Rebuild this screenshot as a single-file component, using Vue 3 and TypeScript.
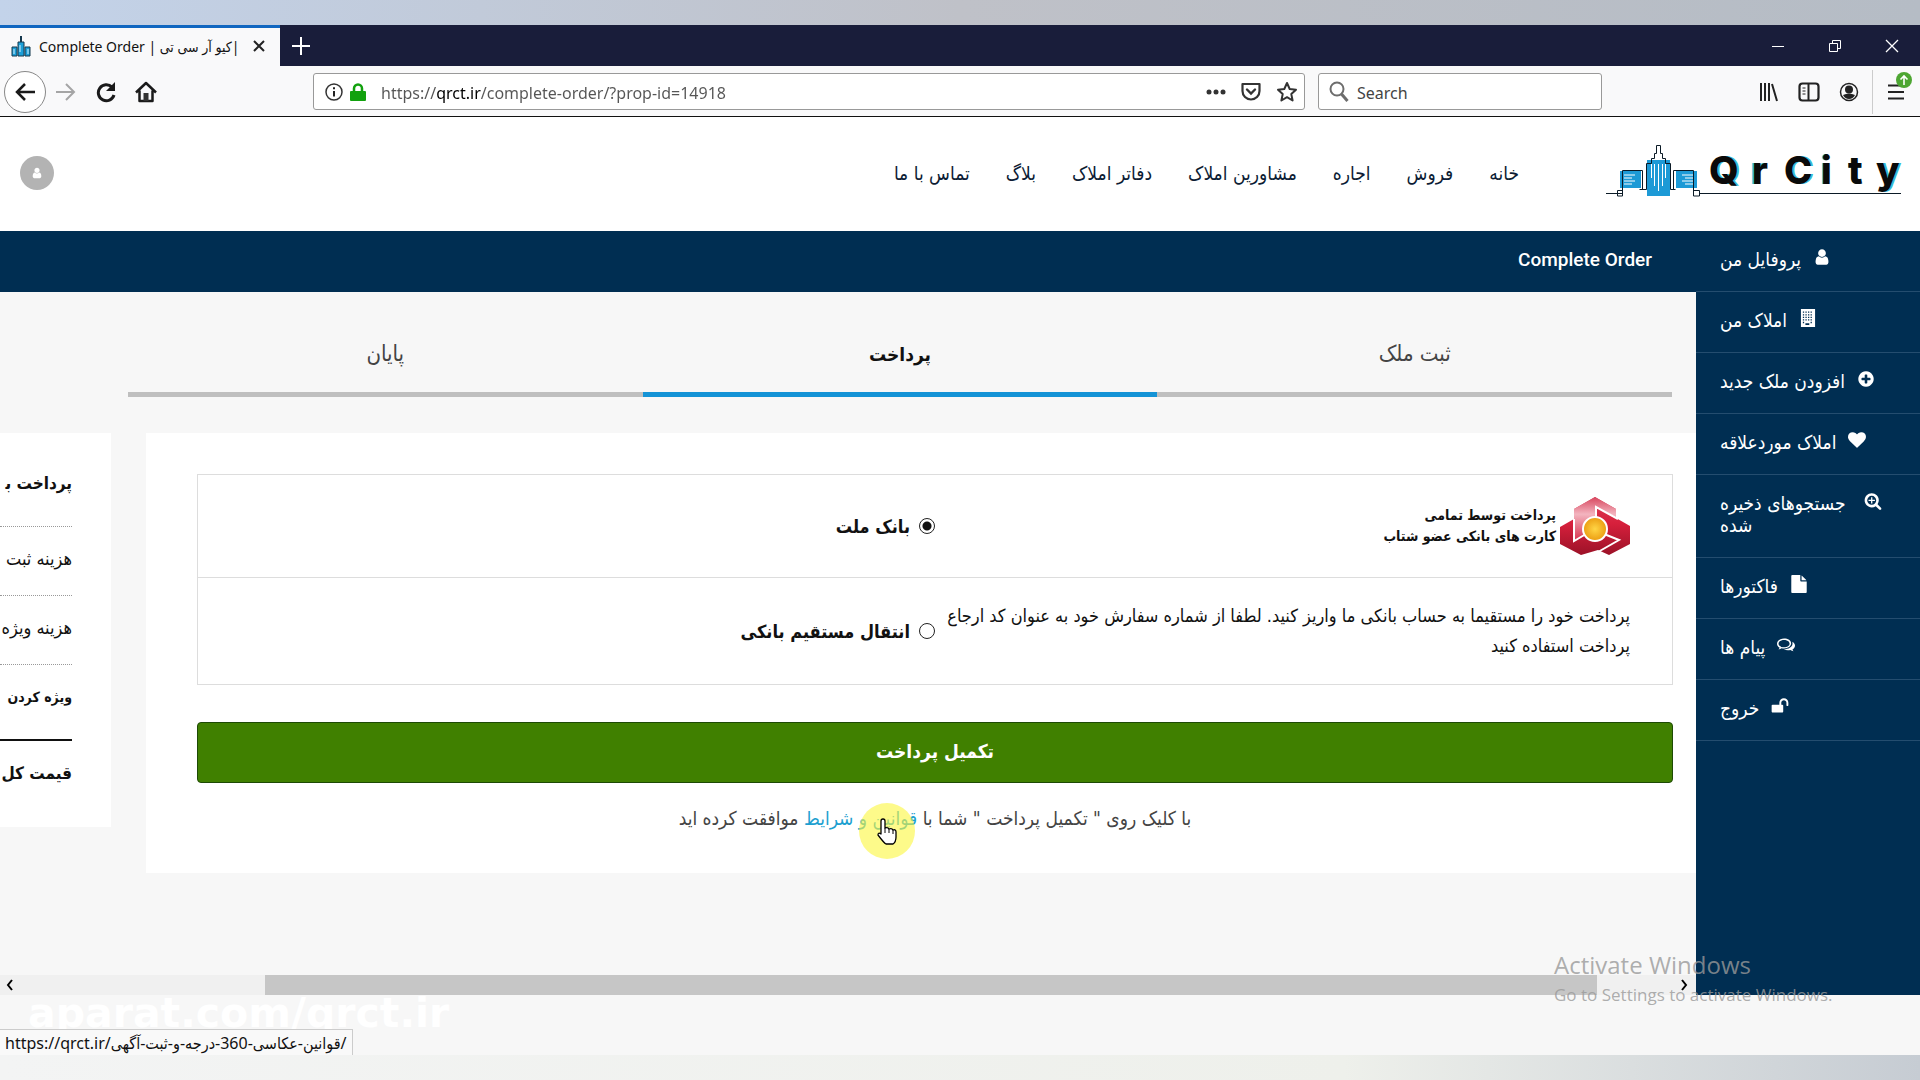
<script setup lang="ts">
import { ref } from 'vue'

interface MenuItem {
  label: string
  icon: string
  wrap?: boolean
}

const tabTitle = 'Complete Order | کیو آر سی تی|'
const address = ref('https://qrct.ir/complete-order/?prop-id=14918')
const query = ref('')
const method = ref('mellat')

const nav: string[] = ['خانه', 'فروش', 'اجاره', 'مشاورین املاک', 'دفاتر املاک', 'بلاگ', 'تماس با ما']

const steps = [
  { label: 'ثبت ملک', active: false },
  { label: 'پرداخت', active: true },
  { label: 'پایان', active: false },
]

const paths: Record<string, string> = {
  user: 'M1536 1399q0 109-62.5 187t-150.5 78h-854q-88 0-150.5-78t-62.5-187q0-85 8.5-160.5t31.5-152 58.5-131 94-89 134.5-34.5q131 128 313 128t313-128q76 0 134.5 34.5t94 89 58.5 131 31.5 152 8.5 160.5zm-256-887q0 159-112.5 271.5t-271.5 112.5-271.5-112.5-112.5-271.5 112.5-271.5 271.5-112.5 271.5 112.5 112.5 271.5z',
  building: 'M192 0h1408v1792h-1408zM384 256v128h128v-128zM640 256v128h128v-128zM896 256v128h128v-128zM1152 256v128h128v-128zM384 512v128h128v-128zM640 512v128h128v-128zM896 512v128h128v-128zM1152 512v128h128v-128zM384 768v128h128v-128zM640 768v128h128v-128zM896 768v128h128v-128zM1152 768v128h128v-128zM384 1024v128h128v-128zM640 1024v128h128v-128zM896 1024v128h128v-128zM1152 1024v128h128v-128zM384 1280v128h128v-128zM1152 1280v128h128v-128zM640 1408v192h384v-192z',
  plus: 'M1344 960v-128q0-26-19-45t-45-19h-256v-256q0-26-19-45t-45-19h-128q-26 0-45 19t-19 45v256h-256q-26 0-45 19t-19 45v128q0 26 19 45t45 19h256v256q0 26 19 45t45 19h128q26 0 45-19t19-45v-256h256q26 0 45-19t19-45zm320-64q0 209-103 385.5t-279.5 279.5-385.5 103-385.5-103-279.5-279.5-103-385.5 103-385.5 279.5-279.5 385.5-103 385.5 103 279.5 279.5 103 385.5z',
  heart: 'M896 1664q-26 0-44-18l-624-602q-10-8-27.5-26t-55.5-65.5-68-97.5-53.5-121-23.5-138q0-220 127-344t351-124q62 0 126.5 21.5t120 58 95.5 68.5 76 68q36-36 76-68t95.5-68.5 120-58 126.5-21.5q224 0 351 124t127 344q0 221-229 450l-623 600q-18 18-44 18z',
  search: 'M1088 800v64q0 13-9.5 22.5t-22.5 9.5h-224v224q0 13-9.5 22.5t-22.5 9.5h-64q-13 0-22.5-9.5t-9.5-22.5v-224h-224q-13 0-22.5-9.5t-9.5-22.5v-64q0-13 9.5-22.5t22.5-9.5h224v-224q0-13 9.5-22.5t22.5-9.5h64q13 0 22.5 9.5t9.5 22.5v224h224q13 0 22.5 9.5t9.5 22.5zm128 32q0-185-131.5-316.5t-316.5-131.5-316.5 131.5-131.5 316.5 131.5 316.5 316.5 131.5 316.5-131.5 131.5-316.5zm512 832q0 53-37.5 90.5t-90.5 37.5q-54 0-90-38l-343-342q-179 124-399 124-143 0-273.5-55.5t-225-150-150-225-55.5-273.5 55.5-273.5 150-225 225-150 273.5-55.5 273.5 55.5 225 150 150 225 55.5 273.5q0 220-124 399l343 343q37 37 37 90z',
  file: 'M1152 512v-472q22 14 36 28l408 408q14 14 28 36h-472zm-128 32q0 40 28 68t68 28h544v1056q0 40-28 68t-68 28h-1344q-40 0-68-28t-28-68v-1600q0-40 28-68t68-28h800v544z',
  comments: 'M704 256C315 256 0 484 0 768c0 160 100 303 257 397-20 66-60 120-110 172 110-14 220-56 312-122 79 16 160 25 245 25 389 0 704-228 704-512S1093 256 704 256zm0 150c300 0 550 164 550 362s-250 362-550 362c-90 0-170-12-262-36l-60 44 20-60-70-46c-110-70-178-160-178-264 0-198 250-362 550-362zM1530 560c160 90 262 220 262 390 0 160-96 300-252 392 20 68 58 122 108 174-120-8-226-54-318-122-80 16-160 24-246 24-150 0-292-36-408-100 450 10 820-190 866-520 8-90-2-170-12-238z',
  unlock: 'M1728 576v256q0 26-19 45t-45 19h-64q-26 0-45-19t-19-45v-256q0-106-75-181t-181-75-181 75-75 181v192h96q40 0 68 28t28 68v576q0 40-28 68t-68 28h-960q-40 0-68-28t-28-68v-576q0-40 28-68t68-28h672v-192q0-185 131.5-316.5t316.5-131.5 316.5 131.5 131.5 316.5z',
}

const menu: MenuItem[] = [
  { label: 'پروفایل من', icon: 'user' },
  { label: 'املاک من', icon: 'building' },
  { label: 'افزودن ملک جدید', icon: 'plus' },
  { label: 'املاک موردعلاقه', icon: 'heart' },
  { label: 'جستجوهای ذخیره شده', icon: 'search', wrap: true },
  { label: 'فاکتورها', icon: 'file' },
  { label: 'پیام ها', icon: 'comments' },
  { label: 'خروج', icon: 'unlock' },
]
</script>

<template>
  <div class="desktop">
    <div class="window">
      <div class="tabs">
        <div class="tab">
          <svg class="favicon" width="20" height="22" viewBox="0 0 20 22">
            <path fill="#1c9fd8" stroke="#15384d" d="M1 21V12h5v9zM7 21V7h6v14zM14 21V12h5v9z" />
            <path fill="none" stroke="#15384d" stroke-width="2" d="M10 7V1" />
            <path stroke="#d9f1fc" d="M3 14v5M17 14v5M9 10v7" />
          </svg>
          <span class="tab-title">{{ tabTitle }}</span>
          <button class="tab-close" aria-label="Close tab">
            <svg width="14" height="14" viewBox="0 0 14 14"><path d="M2 2l10 10M12 2L2 12" stroke="#222" stroke-width="2" /></svg>
          </button>
        </div>
        <button class="tab-new" aria-label="New tab">
          <svg width="18" height="18" viewBox="0 0 18 18"><path d="M9 0v18M0 9h18" stroke="#fff" stroke-width="2" /></svg>
        </button>
        <div class="controls">
          <button aria-label="Minimize"><svg width="14" height="14" viewBox="0 0 14 14"><path d="M1 7.500h12" stroke="#fff" /></svg></button>
          <button aria-label="Restore"><svg width="14" height="14" viewBox="0 0 14 14"><path d="M1.500 4.500h8v8h-8zM4.500 4.500v-3h8v8h-3" fill="none" stroke="#fff" /></svg></button>
          <button aria-label="Close"><svg width="14" height="14" viewBox="0 0 14 14"><path d="M1 1l12 12M13 1L1 13" stroke="#fff" stroke-width="1.300" /></svg></button>
        </div>
      </div>

      <div class="toolbar">
        <button class="back" aria-label="Back">
          <svg width="22" height="20" viewBox="0 0 22 20"><path d="M21 10H3M11 2l-8 8 8 8" fill="none" stroke="#1a1a1a" stroke-width="2.500" /></svg>
        </button>
        <button class="tool" aria-label="Forward">
          <svg width="22" height="20" viewBox="0 0 22 20"><path d="M1 10h18M11 2l8 8-8 8" fill="none" stroke="#a5a5a5" stroke-width="2" /></svg>
        </button>
        <button class="tool" aria-label="Reload">
          <svg width="22" height="22" viewBox="0 0 22 22"><path d="M17 6a8 8 0 1 0 2 8" fill="none" stroke="#1a1a1a" stroke-width="3" /><path d="M20 1v9h-9z" fill="#1a1a1a" /></svg>
        </button>
        <button class="tool" aria-label="Home">
          <svg width="22" height="22" viewBox="0 0 22 22"><path d="M1 11.500L11 2l10 9.500M4.500 9.500V20h13V9.500" fill="none" stroke="#1a1a1a" stroke-width="2.500" stroke-linejoin="round" /><path d="M8.500 12h5v8h-5z" fill="#333" /></svg>
        </button>

        <div class="field url">
          <svg width="18" height="18" viewBox="0 0 18 18"><circle cx="9" cy="9" r="8" fill="none" stroke="#333" stroke-width="1.500" /><path d="M9 8v5.500M9 4.200v2" stroke="#222" stroke-width="2" /></svg>
          <svg class="lock" width="16" height="18" viewBox="0 0 16 18"><path d="M4 9V5.500a4 4 0 0 1 8 0V9" fill="none" stroke="#12a10e" stroke-width="2.500" /><rect y="8" width="16" height="10" rx="1" fill="#12a10e" /></svg>
          <input v-model="address" class="address" aria-label="Address" />
          <svg width="20" height="6" viewBox="0 0 20 6"><circle cx="3" cy="3" r="2.500" fill="#333" /><circle cx="10" cy="3" r="2.500" fill="#333" /><circle cx="17" cy="3" r="2.500" fill="#333" /></svg>
          <svg width="20" height="20" viewBox="0 0 20 20"><path d="M1.500 2h17v7a8.500 8.500 0 0 1-17 0z" fill="none" stroke="#333" stroke-width="2.200" stroke-linejoin="round" /><path d="M6 7.500l4 4 4-4" fill="none" stroke="#333" stroke-width="2.400" stroke-linecap="round" /></svg>
          <svg width="22" height="22" viewBox="0 0 22 22"><path d="M11 2l2.700 6 6.300.7-4.700 4.400 1.300 6.400-5.600-3.300-5.600 3.300 1.300-6.400L2 8.700 8.300 8z" fill="none" stroke="#333" stroke-width="2" stroke-linejoin="round" /></svg>
        </div>

        <div class="field search">
          <svg width="20" height="22" viewBox="0 0 20 22"><circle cx="8" cy="8" r="6.500" fill="none" stroke="#6d6d6d" stroke-width="2" /><path d="M12.500 13l6 7" stroke="#6d6d6d" stroke-width="3" /></svg>
          <input v-model="query" placeholder="Search" aria-label="Search" />
        </div>

        <div class="right-tools">
          <button class="tool" aria-label="Library"><svg width="20" height="20" viewBox="0 0 20 20"><path d="M2 1v18M6 1v18M10 1v18M13 2l5 17" stroke="#222" stroke-width="2" /></svg></button>
          <button class="tool" aria-label="Sidebars"><svg width="22" height="20" viewBox="0 0 22 20"><rect x="1.500" y="1.500" width="19" height="17" rx="3" fill="none" stroke="#222" stroke-width="2.200" /><path d="M10.500 2v16" stroke="#222" stroke-width="2" /><path d="M4.500 6h3M4.500 9h3M4.500 12h3" stroke="#222" /></svg></button>
          <button class="tool" aria-label="Account"><svg width="20" height="20" viewBox="0 0 20 20"><circle cx="10" cy="10" r="8.500" fill="none" stroke="#222" stroke-width="1.500" /><circle cx="10" cy="7.500" r="4" fill="#222" /><path d="M4 13q6-3 12 0-2 4-6 4t-6-4z" fill="#222" /></svg></button>
          <span class="divider"></span>
          <button class="tool menu-button" aria-label="Menu">
            <svg width="16" height="16" viewBox="0 0 16 16"><path d="M0 1.500h16M0 8h16M0 14.500h16" stroke="#222" stroke-width="2.200" /></svg>
            <svg class="badge" width="16" height="16" viewBox="0 0 16 16"><circle cx="8" cy="8" r="8" fill="#4da632" /><path d="M8 13V4M4.500 7.500L8 4l3.500 3.500" fill="none" stroke="#fff" stroke-width="1.600" /></svg>
          </button>
        </div>
      </div>

      <header class="site-header" dir="rtl">
        <a href="#" class="logo" aria-label="QrCity">
          <svg width="296" height="56" viewBox="0 0 296 56">
            <path fill="#1d9ad6" d="M14 26h21v17H14zM41 15h23v36H41zM70 26h21v17H70z" />
            <path stroke="#fff" d="M18 30h11M18 33h8M18 36h11M18 39h8M76 30h11M79 33h8M76 36h11M79 39h8M45.500 19v14M48.500 19v22M52.500 19v27M56.500 19v22M59.500 19v14" />
            <path fill="none" stroke="#0b1a26" d="M0 48.500h16.500M11.500 45.500h5M11.500 45.500v5.500h5V25.500h20v19h-3M40.500 44.500h-5M40.500 44.500v-26h5v-5h3v-5h2v-8h4v8h2v5h3v5h5v26M64.500 44.500h5M67.500 44.500V25.500h20V51h6v-5.500h-6M93 48.500h202" />
            <g class="logo-text">
              <text class="logo-glow" x="105 144 180 214 242 272" y="39">QrCity</text>
              <text x="103 146 178 215 242 270" y="39">QrCity</text>
            </g>
          </svg>
        </a>
        <nav>
          <a v-for="item in nav" :key="item" href="#">{{ item }}</a>
        </nav>
        <button class="avatar" aria-label="حساب کاربری">
          <svg width="12" height="12" viewBox="0 0 1792 1792"><path :d="paths.user" fill="#fff" /></svg>
        </button>
      </header>

      <div class="shell">
        <main>
          <h1>Complete Order</h1>
          <ol class="steps" dir="rtl">
            <li v-for="step in steps" :key="step.label" :class="{ active: step.active }">{{ step.label }}</li>
          </ol>

          <div class="columns">
            <aside class="summary" dir="rtl">
              <h2>پرداخت ب&zwj;</h2>
              <p>هزینه ثبت</p>
              <p>هزینه ویژه</p>
              <p class="strong">ویژه کردن</p>
              <p class="total">قیمت کل</p>
            </aside>

            <section class="payment" dir="rtl">
              <div class="methods">
                <div class="method">
                  <div class="about bank">
                    <svg width="70" height="58" viewBox="0 0 70 58">
                      <defs>
                        <linearGradient id="red" x1="0" y1="0" x2="0" y2="1"><stop offset="0" stop-color="#d9405a" /><stop offset=".45" stop-color="#d7203c" /><stop offset="1" stop-color="#9c1228" /></linearGradient>
                        <linearGradient id="pink" x1="0" y1="0" x2="0" y2="1"><stop offset="0" stop-color="#d8465e" /><stop offset=".4" stop-color="#f3b4bf" /><stop offset="1" stop-color="#d93650" /></linearGradient>
                        <radialGradient id="gold"><stop offset="0" stop-color="#ffd545" /><stop offset="1" stop-color="#eb9c11" /></radialGradient>
                      </defs>
                      <path fill="url(#red)" d="M14 12L35 0l21 12v9l14 8v18L49 58l-11-5-17 5L0 47V30l14-8z" />
                      <path fill="url(#pink)" d="M14 12L35 0l21 12v8L36 10v22L14 43z" />
                      <path fill="none" stroke="#fff" stroke-width="2" d="M36 22V10l22 12M14 22v22l12-7M44 37l15 6-21 12" />
                      <circle cx="35" cy="32" r="12" fill="url(#gold)" stroke="#fff" stroke-width="2" />
                    </svg>
                    <span>پرداخت توسط تمامی<br />کارت های بانکی عضو شتاب</span>
                  </div>
                  <label><input v-model="method" type="radio" name="method" value="mellat" />بانک ملت</label>
                </div>
                <div class="method">
                  <p class="about">پرداخت خود را مستقیما به حساب بانکی ما واریز کنید. لطفا از شماره سفارش خود به عنوان کد ارجاع<br />پرداخت استفاده کنید</p>
                  <label><input v-model="method" type="radio" name="method" value="transfer" />انتقال مستقیم بانکی</label>
                </div>
              </div>
              <button class="pay">تکمیل پرداخت</button>
              <p class="terms">با کلیک روی " تکمیل پرداخت " شما با <a href="#">قوانین و شرایط</a> موافقت کرده اید</p>
            </section>
          </div>

          <div class="scrollbar">
            <svg width="8" height="12" viewBox="0 0 8 12"><path d="M6 1L2 6l4 5" fill="none" stroke="#000" stroke-width="2" /></svg>
            <div class="track"><div class="thumb"></div></div>
            <svg width="8" height="12" viewBox="0 0 8 12"><path d="M2 1l4 5-4 5" fill="none" stroke="#000" stroke-width="2" /></svg>
          </div>
        </main>

        <nav class="sidebar">
          <a v-for="item in menu" :key="item.icon" href="#">
            <span dir="rtl" :class="{ wrap: item.wrap }">{{ item.label }}</span>
            <svg width="18" height="18" viewBox="0 0 1792 1792"><path :d="paths[item.icon]" fill="#fff" fill-rule="evenodd" /></svg>
          </a>
        </nav>
      </div>

      <footer>
        <span class="watermark">aparat.com/qrct.ir</span>
        <span class="status">https://qrct.ir/قوانین-عکاسی-360-درجه-و-ثبت-آگهی/</span>
      </footer>
    </div>

    <div class="activate">
      <strong>Activate Windows</strong>
      <span>Go to Settings to activate Windows.</span>
    </div>
    <svg class="pointer" width="56" height="56" viewBox="0 0 56 56">
      <circle cx="28" cy="28" r="28" fill="#fbf73c" fill-opacity=".6" />
      <path d="M22 31V18q0-2 2-2t2 2v7q3-1 4 1 3-1 4 1 3-1 3 2v5q0 5-3 7h-7q-2-1-8-9 0-3 3-1z" fill="#fff" stroke="#000" stroke-width="1.300" stroke-linejoin="round" />
      <path d="M26 25v5M30 26v4M34 27v4" stroke="#000" />
    </svg>
  </div>
</template>

<style>
body {
  margin: 0;
}
</style>

<style scoped>
.desktop {
  position: relative;
  box-sizing: border-box;
  display: flex;
  flex-direction: column;
  min-height: 100vh;
  padding: 25px 0;
  overflow: hidden;
  background:
    linear-gradient(90deg, #c3d3ea, #bfc1c8 50%, #b5bcc5) top / 100% 25px no-repeat,
    linear-gradient(90deg, #f3f4f4, #eef0eb 70%, #c6ccd3) bottom / 100% 25px no-repeat;
  font-family: "DejaVu Sans Condensed", "DejaVu Sans", sans-serif;
  font-size: 19px;
  color: #111;
}
button {
  display: flex;
  align-items: center;
  justify-content: center;
  padding: 0;
  border: 0;
  background: none;
  font-family: inherit;
}
a {
  color: inherit;
  text-decoration: none;
}
h1, h2, p, ol {
  margin: 0;
  padding: 0;
}
.window {
  flex: 1;
  display: flex;
  flex-direction: column;
  background: #f7f7f7;
}

.tabs {
  display: flex;
  height: 41px;
  background: #191d3a;
  font-family: "Noto Sans", "DejaVu Sans Condensed", sans-serif;
}
.tab {
  box-sizing: border-box;
  display: flex;
  align-items: center;
  width: 280px;
  padding: 0 14px 2px 11px;
  border-top: 3px solid #1066c0;
  background: #f9f9fa;
}
.tab-title {
  flex: 1;
  margin-left: 8px;
  font-size: 14px;
  white-space: nowrap;
}
.tab-new {
  width: 42px;
}
.controls {
  display: flex;
  margin-left: auto;
}
.controls button {
  width: 57px;
}

.toolbar {
  box-sizing: border-box;
  display: flex;
  align-items: center;
  height: 51px;
  padding: 1px 4px 0;
  border-bottom: 1px solid #111;
  background: #f9f9fa;
  font-family: "Noto Sans", sans-serif;
}
.back {
  width: 42px;
  height: 42px;
  border: 1px solid #888;
  border-radius: 50%;
  background: #fff;
}
.tool {
  position: relative;
  width: 40px;
  height: 40px;
}
.field {
  box-sizing: border-box;
  display: flex;
  align-items: center;
  height: 37px;
  border: 1px solid #999;
  border-radius: 3px;
  background: #fff;
}
.field input {
  flex: 1;
  min-width: 0;
  padding: 2px 0 0;
  border: 0;
  outline: 0;
  background: none;
  font-family: inherit;
  font-size: 16px;
  color: #333;
}
.field input::placeholder {
  color: #444;
  opacity: 1;
}
.field .address {
  margin-left: 8px;
  background: linear-gradient(90deg, #555 56px, #000 56px 100px, #555 100px);
  background-clip: text;
  -webkit-background-clip: text;
  color: transparent;
}
.url {
  flex: 1;
  gap: 15px;
  margin-left: 147px;
  padding: 0 6px 0 11px;
}
.lock {
  margin: 0 -8px;
}
.search {
  width: 284px;
  gap: 8px;
  margin-left: 13px;
  padding: 0 10px;
}
.right-tools {
  display: flex;
  align-items: center;
  margin-left: 147px;
}
.divider {
  width: 1px;
  height: 44px;
  margin: 0 3px;
  background: #ccc;
}
.badge {
  position: absolute;
  top: 0;
  right: 4px;
}

.site-header {
  box-sizing: border-box;
  display: flex;
  align-items: center;
  height: 114px;
  padding: 0 18px 3px 20px;
  background: #fff;
}
.logo svg {
  display: block;
}
.logo-text {
  direction: ltr;
  font-family: Inter, "Liberation Sans", sans-serif;
  font-size: 38px;
  font-weight: 800;
  fill: #0a0a0a;
}
.logo-glow {
  fill: #35bdd6;
}
.site-header nav {
  display: flex;
  gap: 36px;
  margin-right: 87px;
  color: #0c1c34;
  white-space: nowrap;
}
.avatar {
  width: 34px;
  height: 34px;
  margin-right: auto;
  border-radius: 50%;
  background: #b3b3b3;
}

.shell {
  flex: 1;
  display: flex;
}
main {
  flex: 1;
  display: flex;
  flex-direction: column;
  min-width: 0;
}
h1 {
  height: 61px;
  padding-right: 44px;
  background: #002e52;
  color: #fff;
  font-family: Roboto, sans-serif;
  font-size: 19px;
  font-weight: 500;
  line-height: 57px;
  text-align: right;
}
.steps {
  display: flex;
  margin: 0 24px 36px 128px;
  padding-top: 42px;
  list-style: none;
}
.steps li {
  flex: 1;
  padding-bottom: 18px;
  border-bottom: 5px solid #bfbfbf;
  color: #444;
  font-size: 22px;
  line-height: 40px;
  text-align: center;
}
.steps .active {
  border-color: #1493d6;
  color: #111;
  font-size: 19px;
  font-weight: 700;
}
.columns {
  display: flex;
  align-items: flex-start;
  gap: 35px;
}
.summary {
  box-sizing: border-box;
  width: 111px;
  height: 394px;
  padding: 20px 39px 0 0;
  overflow: hidden;
  background: #fff;
  white-space: nowrap;
}
.summary h2,
.summary p {
  padding: 0 0 4px;
  border-bottom: 1px dotted #999;
  font-size: 18px;
  font-weight: 400;
  line-height: 64px;
}
.summary h2 {
  padding-bottom: 13px;
  font-size: 17px;
  font-weight: 700;
  line-height: 60px;
}
.summary .strong {
  padding-bottom: 10px;
  border-bottom: 2px solid #111;
  font-size: 14px;
  font-weight: 700;
}
.summary .total {
  border: 0;
  font-size: 17px;
  font-weight: 700;
}
.payment {
  flex: 1;
  padding: 41px 23px 40px 51px;
  background: #fff;
}
.methods {
  border: 1px solid #ddd;
}
.method {
  display: flex;
  align-items: center;
  height: 102px;
  padding-right: 42px;
}
.method + .method {
  height: 106px;
  border-top: 1px solid #ddd;
}
.about {
  flex: 0 0 695px;
  font-size: 18px;
  line-height: 30px;
  white-space: nowrap;
}
.bank {
  display: flex;
  align-items: center;
  gap: 4px;
  font-weight: 700;
  font-size: 14px;
  line-height: 21px;
}
.method label {
  display: flex;
  align-items: center;
  gap: 9px;
  font-size: 18px;
  font-weight: 700;
  white-space: nowrap;
}
.method input {
  appearance: none;
  width: 16px;
  height: 16px;
  margin: 0;
  border: 1px solid #222;
  border-radius: 50%;
  background: #fff;
}
.method input:checked {
  background: radial-gradient(circle, #111 4px, #fff 5px);
}
.pay {
  width: 100%;
  height: 61px;
  margin-top: 37px;
  padding-bottom: 4px;
  border: 1px solid #1d4a05;
  border-radius: 4px;
  background: #408000;
  color: #fff;
  font-size: 19px;
  font-weight: 700;
}
.terms {
  margin-top: 20px;
  color: #444;
  font-size: 19px;
  line-height: 30px;
  text-align: center;
}
.terms a {
  color: #1c9fd0;
}
.scrollbar {
  display: flex;
  align-items: center;
  gap: 8px;
  height: 20px;
  margin-top: auto;
  padding: 0 8px 0 6px;
  background: #f0f0f0;
}
.track {
  flex: 1;
  padding: 0 75px 0 243px;
}
.thumb {
  height: 20px;
  background: #c6c6c6;
}

.sidebar {
  width: 224px;
  background: #002e52;
  color: #fff;
}
.sidebar a {
  display: flex;
  align-items: flex-start;
  gap: 12px;
  padding: 17px 24px 21px;
  border-bottom: 1px solid #244d6f;
  line-height: 22px;
}
.sidebar .wrap {
  width: min-content;
  min-width: 132px;
  text-align: left;
}
.sidebar svg {
  flex: none;
}

footer {
  position: relative;
  height: 60px;
}
.watermark {
  position: absolute;
  top: -4px;
  left: 28px;
  color: #fff;
  font-family: "DejaVu Sans", sans-serif;
  font-size: 41px;
  font-weight: 700;
  line-height: 44px;
}
.status {
  position: absolute;
  bottom: 0;
  left: 0;
  box-sizing: border-box;
  height: 26px;
  padding: 0 5px;
  border: solid #ccc;
  border-width: 1px 1px 0 0;
  background: #f9f9f9;
  font-family: "Noto Sans", "DejaVu Sans Condensed", sans-serif;
  font-size: 16px;
  line-height: 26px;
  white-space: nowrap;
}
.activate {
  position: absolute;
  right: 81px;
  bottom: 72px;
  display: flex;
  flex-direction: column;
  width: 285px;
  color: #999c;
  font-family: "Open Sans", sans-serif;
  font-size: 17px;
  line-height: 26px;
  white-space: nowrap;
}
.activate strong {
  font-size: 24px;
  font-weight: 400;
  line-height: 34px;
}
.pointer {
  position: absolute;
  top: 803px;
  left: 859px;
}
</style>
